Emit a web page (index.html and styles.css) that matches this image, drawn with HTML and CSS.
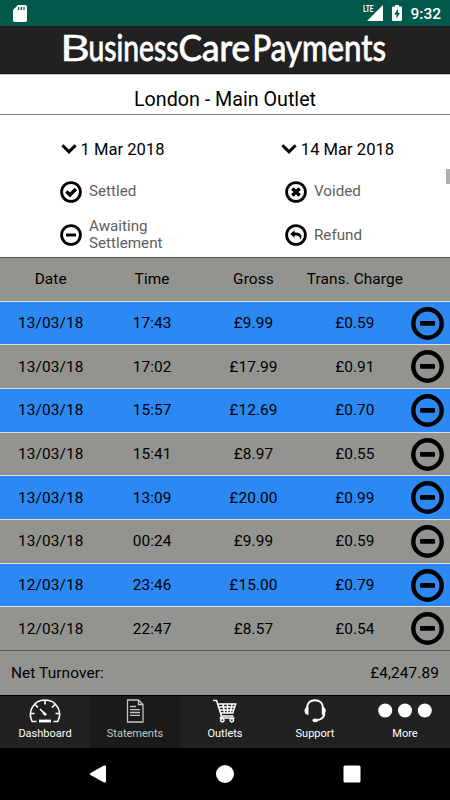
FILE: index.html
```html
<!DOCTYPE html>
<html lang="en">
<head>
<meta charset="utf-8">
<title>BusinessCare Payments</title>
<link rel="stylesheet" href="styles.css">
</head>
<body>
<svg class="defs" aria-hidden="true">
  <symbol id="minus" viewBox="0 0 33 33"><circle cx="16.5" cy="16.5" r="14.2" fill="none" stroke="#000" stroke-width="4.4"/><rect x="9" y="14.1" width="15" height="4.6" rx=".8"/></symbol>
  <symbol id="chevron" viewBox="0 0 16 12"><path d="M1.4 2.200 8 8.8l6.6-6.6" fill="none" stroke="#000" stroke-width="3"/></symbol>
</svg>
<div class="app">
  <div class="status">
    <svg class="sd" viewBox="0 0 14 17"><path d="M5 0h7.3Q14 0 14 1.700V15.300Q14 17 12.300 17H1.700Q0 17 0 15.300V5Z" fill="#fff"/><path d="M5.600 2v3M8.300 2v3M11 2v3" stroke="#00594b" stroke-width="1.300"/></svg>
    <div class="status-right">
      <span class="lte">LTE</span>
      <svg class="signal" viewBox="0 0 16 16"><path d="M16 0v16H0Z" fill="#fff"/></svg>
      <svg class="battery" viewBox="0 0 10 16"><path d="M3 0h4v1.500h2q1 0 1 1V15q0 1-1 1H1q-1 0-1-1V2.500q0-1 1-1h2Z" fill="#fff"/><path d="M6 3.800 2.200 9.500h2.300v3.900L8 7.900H5.800Z" fill="#00594b"/></svg>
      <span class="clock">9:32</span>
    </div>
  </div>
  <header class="brand">
    <svg viewBox="0 0 450 47">
      <text class="initial" x="60" y="35" textLength="30" lengthAdjust="spacingAndGlyphs">B</text>
      <text x="88.500" y="35" textLength="90" lengthAdjust="spacingAndGlyphs">usiness</text>
      <text x="178.500" y="35" textLength="71.500" lengthAdjust="spacingAndGlyphs">Care</text>
      <text x="252.500" y="35" textLength="133.500" lengthAdjust="spacingAndGlyphs">Payments</text>
    </svg>
  </header>
  <h1 class="outlet">London - Main Outlet</h1>
  <section class="filters">
    <div class="dates">
      <div class="date"><svg><use href="#chevron"/></svg><span>1 Mar 2018</span></div>
      <div class="date"><svg><use href="#chevron"/></svg><span>14 Mar 2018</span></div>
    </div>
    <div class="legend">
      <div class="key"><svg viewBox="0 0 22 22"><circle cx="11" cy="11" r="9.400" fill="none" stroke="#000" stroke-width="2.800"/><path d="m6.400 10.400 3.500 3.600 6-6" fill="none" stroke="#000" stroke-width="3.400"/></svg><span>Settled</span></div>
      <div class="key"><svg viewBox="0 0 22 22"><circle cx="11" cy="11" r="9.400" fill="none" stroke="#000" stroke-width="2.800"/><path d="m7.400 7.400 7.200 7.200m0-7.200-7.200 7.200" fill="none" stroke="#000" stroke-width="3.600"/></svg><span>Voided</span></div>
      <div class="key"><svg viewBox="0 0 22 22"><circle cx="11" cy="11" r="9.400" fill="none" stroke="#000" stroke-width="2.800"/><rect x="6" y="9.600" width="10" height="2.800" rx=".5"/></svg><span>Awaiting<br>Settlement</span></div>
      <div class="key"><svg viewBox="0 0 22 22"><circle cx="11" cy="11" r="9.400" fill="none" stroke="#000" stroke-width="2.800"/><path d="M5.300 10 9.500 6.300v2.200c4.500 0 7 1.500 7 4 0 1.500-.7 2.300-1.700 3 .5-2.700-.7-3.900-5.300-3.900v2.200Z"/></svg><span>Refund</span></div>
    </div>
    <i class="scrollbar"></i>
  </section>
  <section class="table">
    <div class="row"><span>Date</span><span>Time</span><span>Gross</span><span>Trans. Charge</span></div>
    <div class="row blue"><span>13/03/18</span><span>17:43</span><span>£9.99</span><span>£0.59</span><svg><use href="#minus"/></svg></div>
    <div class="row"><span>13/03/18</span><span>17:02</span><span>£17.99</span><span>£0.91</span><svg><use href="#minus"/></svg></div>
    <div class="row blue"><span>13/03/18</span><span>15:57</span><span>£12.69</span><span>£0.70</span><svg><use href="#minus"/></svg></div>
    <div class="row"><span>13/03/18</span><span>15:41</span><span>£8.97</span><span>£0.55</span><svg><use href="#minus"/></svg></div>
    <div class="row blue"><span>13/03/18</span><span>13:09</span><span>£20.00</span><span>£0.99</span><svg><use href="#minus"/></svg></div>
    <div class="row"><span>13/03/18</span><span>00:24</span><span>£9.99</span><span>£0.59</span><svg><use href="#minus"/></svg></div>
    <div class="row blue"><span>12/03/18</span><span>23:46</span><span>£15.00</span><span>£0.79</span><svg><use href="#minus"/></svg></div>
    <div class="row"><span>12/03/18</span><span>22:47</span><span>£8.57</span><span>£0.54</span><svg><use href="#minus"/></svg></div>
  </section>
  <div class="total"><span>Net Turnover:</span><span>£4,247.89</span></div>
  <nav class="tabs">
    <div class="tab"><svg viewBox="0 0 32 24" fill="none" stroke="#fff" stroke-width="1.600"><path d="M7.500 22.500H3.200C-2 12 5 1 16 1s18 11 12.800 21.500h-4.300M16 1v4.500M6 5.500l3 3M26 5.500l-3 3M1 14.500h4.500M31 14.500h-4.500M11 10l6 6"/><path d="m14 13.300 3 2.700" stroke-width="2.400"/><path d="M10 22h12" stroke-width="2.800"/></svg><span>Dashboard</span></div>
    <div class="tab active"><svg viewBox="0 0 32 24" fill="none" stroke="#c4c4c4" stroke-width="1.300"><path d="M8.500 1h11l4.500 4.500V23H8.500ZM19.500 1v4.500H24M11 7.500h6M11 10.700h10M11 13.500h10M11 16.300h10"/></svg><span>Statements</span></div>
    <div class="tab"><svg viewBox="0 0 32 24" fill="none" stroke="#fff" stroke-width="1.500"><path d="M4 1.500h3.500l5 15.500h12M8.500 5h18.200l-2.900 9H12M9.700 8h16M10.800 11h14M14 5l1.500 9M18.500 5v9M23 5l-1.700 9M12.500 17l-1 2h14"/><circle cx="13.300" cy="21.300" r="1.700"/><circle cx="22.800" cy="21.300" r="1.700"/></svg><span>Outlets</span></div>
    <div class="tab"><svg viewBox="0 0 32 24"><path d="M8 9C8 4 11.500 1.200 16 1.200S24 4 24 9M25.500 15c-1 4-4 6-8 6" fill="none" stroke="#fff" stroke-width="2"/><path d="M9.500 7.500v8.500c-2.800 0-4-2-4-4.200s1.200-3.800 4-4.300ZM22.800 7.500v8.500c2.800 0 4-2 4-4.200s-1.200-3.800-4-4.300Z" fill="#fff"/><ellipse cx="16.300" cy="21.300" rx="2.800" ry="1.900" fill="#fff"/></svg><span>Support</span></div>
    <div class="tab"><svg class="more" viewBox="0 0 54 24" fill="#fff"><circle cx="7.200" cy="11.500" r="7"/><circle cx="27" cy="11.500" r="7"/><circle cx="46.800" cy="11.500" r="7"/></svg><span>More</span></div>
  </nav>
  <div class="system">
    <svg viewBox="0 0 18 18"><path d="M1.500 8 15 .6Q17 0 17 1.500V16.500Q17 18 15 17.400L1.500 10Q0 9 1.500 8Z" fill="#fff"/></svg>
    <svg viewBox="0 0 18 18"><circle cx="9" cy="9" r="9" fill="#fff"/></svg>
    <svg viewBox="0 0 18 18"><rect x=".5" y=".5" width="17" height="17" rx="1.500" fill="#fff"/></svg>
  </div>
</div>
</body>
</html>
```
FILE: styles.css
```css
* { box-sizing: border-box; }
body { margin: 0; font-family: Roboto, sans-serif; color: #000; }
.defs { display: none; }
.app { width: 450px; height: 800px; display: flex; flex-direction: column; background: #fff; overflow: hidden; }
.status { height: 26px; background: #00594b; color: #fff; display: flex; justify-content: space-between; align-items: flex-start; padding: 5px 9px 0 13px; }
.sd { width: 14px; height: 17px; }
.status-right { display: flex; }
.lte { font-size: 9px; line-height: 9px; font-weight: 700; width: 4px; white-space: nowrap; transform: scaleX(.72); transform-origin: left; }
.signal { width: 16px; height: 16px; }
.battery { width: 10px; height: 16px; margin: 0 8px 0 9px; }
.clock { font-size: 15.500px; line-height: 18px; font-weight: 500; }
.brand { height: 48px; background: #212121; border-bottom: 1px solid #111; }
.brand svg { display: block; width: 450px; height: 47px; }
.brand text { font-family: Lato, sans-serif; font-weight: 400; font-size: 36px; fill: #fff; stroke: #fff; stroke-width: .9px; }
.brand .initial { stroke-width: .3px; }
.outlet { margin: 0; height: 41px; line-height: 49px; border-top: 1px solid #ccc; border-bottom: 1px solid #808080; text-align: center; font-size: 19.700px; font-weight: 400; }
.filters { height: 142px; position: relative; }
.dates { display: grid; grid-template-columns: 1fr 1fr; height: 55px; padding-top: 13px; }
.date { display: flex; align-items: center; justify-content: center; gap: 4px; font-size: 16.600px; }
.date svg { width: 16px; height: 12px; }
.legend { display: grid; grid-template-columns: 225px 225px; grid-template-rows: 43px 44px; color: #606060; font-size: 15.200px; line-height: 17px; }
.key { display: flex; align-items: center; gap: 7px; padding-left: 60px; }
.key svg { width: 22px; height: 22px; }
.scrollbar { position: absolute; right: 0; top: 54px; width: 4px; height: 15px; background: #b0b0b0; }
.table { height: 393px; border-top: 1px solid #555; display: flex; flex-direction: column; }
.row { flex: 1; display: grid; grid-template-columns: repeat(4, 101.400px) 44.400px; align-items: center; justify-items: center; background: #93948f; border-bottom: 1px solid #ddd; font-size: 15.400px; letter-spacing: .1px; }
.row:last-child { border-bottom: 0; }
.row.blue { background: #2c89f3; }
.row svg { width: 33px; height: 33px; }
.total { height: 45px; border-top: 1px solid #555; background: #93948f; display: flex; justify-content: space-between; align-items: center; padding: 0 11px; font-size: 15.400px; letter-spacing: .1px; }
.tabs { height: 53px; display: grid; grid-template-columns: repeat(5, 1fr); background: #212121; border-top: 1px solid #000; color: #fff; }
.tab { display: flex; flex-direction: column; align-items: center; padding-top: 3px; font-size: 11px; line-height: 13px; gap: 4px; }
.tab svg { width: 32px; height: 24px; }
.tab svg.more { width: 54px; }
.tab.active { background: #1a1a1a; color: #c4c4c4; }
.system { flex: 1; background: #000; display: flex; justify-content: center; align-items: center; gap: 109px; }
.system svg { width: 18px; height: 18px; }
```
